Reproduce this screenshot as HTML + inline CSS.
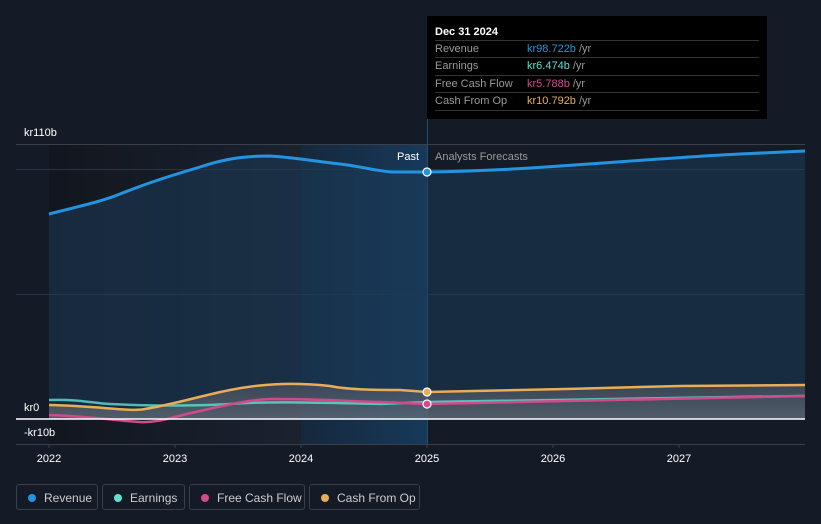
<!DOCTYPE html>
<html><head><meta charset="utf-8"><style>
body{margin:0;width:821px;height:524px;background:#151b26;font-family:"Liberation Sans",sans-serif;overflow:hidden;position:relative}
.tt{position:absolute;left:427px;top:16px;width:340px;height:103px;background:#000;color:#fff;font-size:11px}
.tt .h{position:absolute;left:8px;top:10px;font-weight:bold}
.row{position:absolute;left:8px;width:324px;height:17px;border-top:1px solid #333;line-height:17px;color:#999}
.row span{position:absolute;left:92px}
.leg{position:absolute;top:484px;height:26px;border:1px solid #3a404a;border-radius:3px;color:#ccc;font-size:12px;line-height:26px;box-sizing:border-box}
.leg i{position:absolute;left:11px;top:9px;width:8px;height:8px;border-radius:50%}
.leg b{font-weight:normal;position:absolute;left:27px}
</style></head><body>
<svg width="821" height="524" style="position:absolute;left:0;top:0">
<defs>
<linearGradient id="past" x1="0" x2="1"><stop offset="0" stop-color="#12161e"/><stop offset="1" stop-color="#1a2230"/></linearGradient>
<linearGradient id="hl" x1="0" x2="1"><stop offset="0" stop-color="#16283c"/><stop offset="1" stop-color="#17395a"/></linearGradient>
<linearGradient id="low" x1="0" y1="0" x2="0" y2="1"><stop offset="0" stop-color="#5a5e66" stop-opacity=".5"/><stop offset="1" stop-color="#8a8d94" stop-opacity=".5"/></linearGradient>
</defs>
<rect x="49" y="144" width="252" height="300" fill="url(#past)"/>
<rect x="301" y="144" width="126" height="300" fill="url(#hl)"/>
<line x1="16" y1="144.5" x2="805" y2="144.5" stroke="#3a404a"/>
<line x1="16" y1="169.5" x2="805" y2="169.5" stroke="#2e3542"/>
<line x1="16" y1="294.5" x2="805" y2="294.5" stroke="#2e3542"/>
<line x1="16" y1="444.5" x2="805" y2="444.5" stroke="#3a404a"/>
<line x1="427.5" y1="16" x2="427.5" y2="444" stroke="#2a4a6a"/>
<path d="M49,214 C80,206 100,202 120,194 C150,182 170,176 200,167 C230,157 250,156 270,156 C300,158 320,162 340,164 C365,167 380,172 395,172 L427,172 C480,171 520,169 560,166 C620,162 680,157 740,154 L805,151 L805,419 L49,419Z" fill="#1b3a58" fill-opacity=".55"/>
<path d="M49,405 C100,406 130,412 145,409 C175,404 200,396 230,390 C260,384 290,382 330,386 C350,390 380,390 400,390 L427,392 C500,391 600,388 680,386 L805,385 L805,419 L49,419Z" fill="url(#low)"/>
<path d="M49,214 C80,206 100,202 120,194 C150,182 170,176 200,167 C230,157 250,156 270,156 C300,158 320,162 340,164 C365,167 380,172 395,172 L427,172 C480,171 520,169 560,166 C620,162 680,157 740,154 L805,151" fill="none" stroke="#2394e0" stroke-width="3"/>
<path d="M49,400 C80,399 90,403 110,404 C150,406 200,406 230,404 C265,401 330,403 380,404 L427,402 C600,399 700,397 805,396" fill="none" stroke="#5ee0d0" stroke-width="2.5" opacity=".8"/>
<path d="M49,415 C100,417 120,421 140,422 C160,423 175,416 200,411 C230,404 250,400 270,399 C330,399 360,402 380,402 L427,404 C600,400 700,398 805,396" fill="none" stroke="#d14a8c" stroke-width="2.5"/>
<path d="M49,405 C100,406 130,412 145,409 C175,404 200,396 230,390 C260,384 290,382 330,386 C350,390 380,390 400,390 L427,392 C500,391 600,388 680,386 L805,385" fill="none" stroke="#e9ad58" stroke-width="2.5"/>
<line x1="16" y1="419" x2="805" y2="419" stroke="#fff" stroke-width="1.5"/>
<circle cx="427" cy="172" r="4" fill="#2394e0" stroke="#fff" stroke-width="1.2"/>
<circle cx="427" cy="392" r="4" fill="#e9ad58" stroke="#fff" stroke-width="1.2"/>
<circle cx="427" cy="404" r="4" fill="#d14a8c" stroke="#fff" stroke-width="1.2"/>
<g fill="#fff" font-size="11" font-family="Liberation Sans,sans-serif">
<text x="24" y="136">kr110b</text><text x="24" y="411">kr0</text><text x="24" y="436">-kr10b</text>
<text x="419" y="160" text-anchor="end">Past</text>
<text x="435" y="160" fill="#999">Analysts Forecasts</text>
<g text-anchor="middle"><text x="49" y="462">2022</text><text x="175" y="462">2023</text><text x="301" y="462">2024</text><text x="427" y="462">2025</text><text x="553" y="462">2026</text><text x="679" y="462">2027</text></g>
</g>
<g stroke="#3a404a"><line x1="49" y1="444" x2="49" y2="448"/><line x1="175" y1="444" x2="175" y2="448"/><line x1="301" y1="444" x2="301" y2="448"/><line x1="427" y1="444" x2="427" y2="448"/><line x1="553" y1="444" x2="553" y2="448"/><line x1="679" y1="444" x2="679" y2="448"/></g>
</svg>
<div class="tt"><div class="h">Dec 31 2024</div>
<div class="row" style="top:24px">Revenue<span><font color="#2394e0">kr98.722b</font> /yr</span></div>
<div class="row" style="top:41px">Earnings<span><font color="#5ee0d0">kr6.474b</font> /yr</span></div>
<div class="row" style="top:59px">Free Cash Flow<span><font color="#d14a8c">kr5.788b</font> /yr</span></div>
<div class="row" style="top:76px;border-bottom:1px solid #333">Cash From Op<span><font color="#e9ad58">kr10.792b</font> /yr</span></div>
</div>
<div class="leg" style="left:16px;width:82px"><i style="background:#2394e0"></i><b>Revenue</b></div>
<div class="leg" style="left:102px;width:83px"><i style="background:#5ee0d0"></i><b>Earnings</b></div>
<div class="leg" style="left:189px;width:116px"><i style="background:#d14a8c"></i><b>Free Cash Flow</b></div>
<div class="leg" style="left:309px;width:111px"><i style="background:#e9ad58"></i><b>Cash From Op</b></div>
</body></html>
